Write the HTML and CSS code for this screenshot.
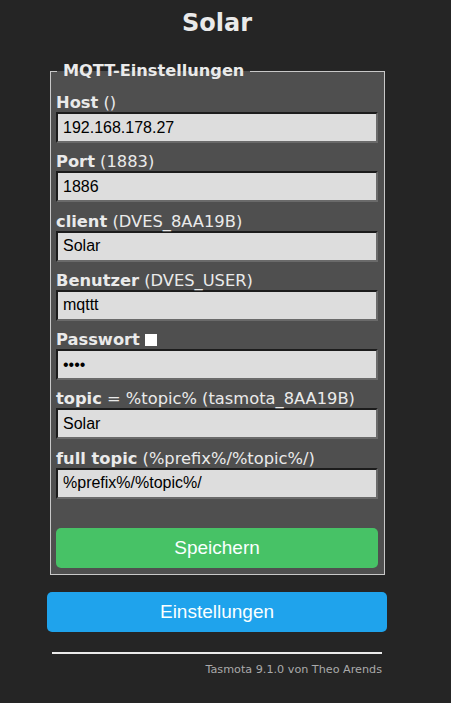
FILE: index.html
```html
<!DOCTYPE html>
<html lang="de">
<head>
  <meta charset="UTF-8" />
  <meta name="viewport" content="width=device-width, initial-scale=1.0"/>
  <title>Solar - MQTT</title>
  <link rel="stylesheet" href="styles.css">
</head>
<body>

  <div class="wrap">
    <h2>Solar</h2>

    <!-- MQTT settings -->
    <fieldset>
      <legend>MQTT-Einstellungen</legend>
      <form>
        <div class="field">
          <label><b>Host</b> ()</label>
          <input type="text" value="192.168.178.27">
        </div>
        <div class="field">
          <label><b>Port</b> (1883)</label>
          <input type="text" value="1886">
        </div>
        <div class="field">
          <label><b>client</b> (DVES_8AA19B)</label>
          <input type="text" value="Solar">
        </div>
        <div class="field">
          <label><b>Benutzer</b> (DVES_USER)</label>
          <input type="text" value="mqttt">
        </div>
        <div class="field">
          <label><b>Passwort</b> <input type="checkbox" class="show-pw"></label>
          <input type="password" value="abcd">
        </div>
        <div class="field">
          <label><b>topic</b> = %topic% (tasmota_8AA19B)</label>
          <input type="text" value="Solar">
        </div>
        <div class="field">
          <label><b>full topic</b> (%prefix%/%topic%/)</label>
          <input type="text" value="%prefix%/%topic%/">
        </div>
        <button type="button" class="button save">Speichern</button>
      </form>
    </fieldset>

    <button type="button" class="button">Einstellungen</button>

    <div class="footer">
      <hr>
      <span>Tasmota 9.1.0 von Theo Arends</span>
    </div>
  </div>

</body>
</html>
```

FILE: styles.css
```css
:root {
  --bg: #252525;
  --text: #eaeaea;
  --field-bg: #4f4f4f;
  --input-bg: #dddddd;
  --blue: #1fa3ec;
  --green: #47c266;
}

* {
  box-sizing: border-box;
}

body {
  margin: 0;
  background-color: var(--bg);
  color: var(--text);
  font-family: "DejaVu Sans", Verdana, sans-serif;
}

.wrap {
  width: 340px;
  margin-left: 47px;
}

h2 {
  text-align: center;
  font-size: 24px;
  margin: 8px 0 24px;
  line-height: 30px;
}

fieldset {
  background-color: var(--field-bg);
  border: 1px solid #c8c8c8;
  margin: 0 2px 0 3px;
  padding: 13px 6px 6px 5px;
}

legend {
  font-weight: bold;
  font-size: 16.2px;
  line-height: 18px;
  padding: 0 6px;
  margin-left: 1px;
}

.field {
  margin-bottom: 9.3px;
}

label {
  display: block;
  font-size: 16.3px;
  line-height: 19px;
}

input[type="text"],
input[type="password"] {
  display: block;
  width: 100%;
  height: 31px;
  padding: 0 5px;
  font-family: "Liberation Sans", Arial, sans-serif;
  font-size: 16px;
  color: #000;
  background-color: var(--input-bg);
  border-style: solid;
  border-width: 2px;
  border-color: #1c1c1c #6a6a6a #6a6a6a #1c1c1c;
}

.show-pw {
  width: 12px;
  height: 12px;
  margin: 0;
  vertical-align: -1px;
  appearance: none;
  background: #fff;
  border: none;
}

.button {
  display: block;
  width: 100%;
  height: 40px;
  border: none;
  border-radius: 5px;
  background-color: var(--blue);
  color: #faffff;
  font-family: "Liberation Sans", Arial, sans-serif;
  font-size: 19px;
  margin-top: 17px;
}

.save {
  background-color: var(--green);
  margin-top: 29px;
}

.footer {
  text-align: right;
  padding: 0 5px;
  margin-top: 20px;
}

hr {
  border: none;
  border-top: 2px solid var(--text);
  margin: 0 0 4px;
}

.footer span {
  font-size: 11.2px;
  color: #aaa;
}
```
